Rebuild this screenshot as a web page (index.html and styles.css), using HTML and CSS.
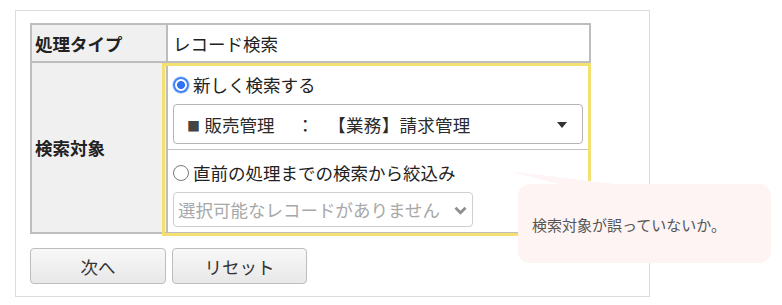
FILE: index.html
```html
<!DOCTYPE html>
<html lang="ja">
<head>
<meta charset="utf-8">
<link rel="stylesheet" href="styles.css">
</head>
<body>
<div class="frame">
  <div class="form">
    <div class="label row1">処理タイプ</div>
    <div class="value row1">レコード検索</div>
    <div class="label row2">検索対象</div>
    <div class="value row2 target">
      <div class="sub sub1">
        <label class="opt"><span class="radio checked"></span>新しく検索する</label>
        <div class="select big"><span class="seltext"><span class="sq">■</span>販売管理<span class="colon">：</span><span class="biz">【業務】請求管理</span></span><span class="tri"></span></div>
      </div>
      <div class="sub sub2">
        <label class="opt"><span class="radio"></span>直前の処理までの検索から絞込み</label>
        <div class="select small"><span>選択可能なレコードがありません</span>
          <svg class="chev" width="13" height="9" viewBox="0 0 13 9"><path d="M1.5 1.8 L6.5 6.8 L11.5 1.8" fill="none" stroke="#8f8f8f" stroke-width="2.8"/></svg>
        </div>
      </div>
      <div class="highlight"></div>
    </div>
  </div>
  <div class="buttons">
    <div class="btn b1">次へ</div>
    <div class="btn b2">リセット</div>
  </div>
</div>
<div class="tip">
  <svg class="pointer" width="120" height="16" viewBox="0 0 120 16"><polygon points="0,0 55,14 115,14" fill="#fef4f4"/></svg>
  <span>検索対象が誤っていないか。</span>
</div>
</body>
</html>
```
FILE: styles.css
```css
* { box-sizing: border-box; }
html, body { margin: 0; padding: 0; background: #fff; }
body {
  font-family: "Noto Sans CJK JP", "Noto Sans", sans-serif;
  font-size: 17.5px;
  color: #222;
  position: relative;
  width: 782px;
  height: 305px;
  overflow: hidden;
}
.frame {
  margin: 10px 0 0 15px;
  width: 635px;
  height: 287px;
  border: 1px solid #dcdcdc;
  padding: 12px 0 0 14px;
}
.form {
  width: 561px;
  display: grid;
  grid-template-columns: 136px 1fr;
  border: 2px solid #bdbdbd;
}
.label {
  background: #f0f0f0;
  border-right: 2px solid #bdbdbd;
  font-weight: 700;
  padding-left: 3px;
  display: flex;
  align-items: center;
}
.row1 { height: 38px; border-bottom: 2px solid #bdbdbd; }
.value.row1 { display: flex; align-items: center; padding-left: 5px; }
.row2 { height: 169px; }
.target { position: relative; display: flex; flex-direction: column; }
.sub { padding: 0 6px 0 5px; display: flex; flex-direction: column; }
.sub1 { height: 87px; padding-top: 10px; border-bottom: 1px solid #c4c4c4; gap: 7px; }
.sub2 { padding-top: 11px; gap: 7px; }
.opt { display: flex; align-items: center; height: 24px; line-height: 24px; }
.radio {
  width: 16px; height: 16px;
  border-radius: 50%;
  border: 1.5px solid #7a7a7a;
  margin-right: 4px;
  background: #fff;
  flex: none;
}
.radio.checked {
  border: 2px solid #3f82f7;
  background: radial-gradient(circle, #2f72f2 0 3.6px, #fff 4.4px);
  box-shadow: 0 0 0 1px #c9dcfd;
}
.select {
  display: flex;
  align-items: center;
  border-radius: 4px;
  background: #fff;
}
.select.big {
  height: 40px;
  border: 1.5px solid #b4b4b4;
  padding: 0 15px 0 13px;
  justify-content: space-between;
}
.seltext { white-space: nowrap; color: #2a2a2a; }
.sq {
  display: inline-block;
  width: 17.5px;
  font-size: 13px;
  color: #444;
  vertical-align: 1px;
}
.colon { margin-left: 22px; }
.biz { margin-left: 23px; letter-spacing: 0.3px; }
.tri {
  width: 0; height: 0;
  border-left: 5px solid transparent;
  border-right: 5px solid transparent;
  border-top: 6px solid #333;
  margin-top: 1px;
}
.select.small {
  width: 300px;
  height: 35px;
  border: 1px solid #cfcfcf;
  padding: 0 5px 0 4px;
  color: #a8a8a8;
  justify-content: space-between;
  white-space: nowrap;
}
.chev { flex: none; margin-top: 1px; }
.highlight {
  position: absolute;
  left: -6px; top: 0; right: -2px; bottom: -4px;
  border: 3px solid #f4e070;
  pointer-events: none;
}
.buttons { display: flex; gap: 6px; margin-top: 14px; }
.btn {
  height: 36px;
  border: 1.5px solid #bdbdbd;
  border-radius: 4px;
  background: linear-gradient(#f8f8f8, #e8e8e8);
  display: flex; align-items: center; justify-content: center;
  color: #333;
}
.b1 { width: 136px; }
.b2 { width: 135px; }
.tip {
  position: absolute;
  left: 518px; top: 184px;
  width: 253px; height: 79px;
  background: #fef4f4;
  border-radius: 12px;
  font-size: 15px;
  color: #555;
  display: flex; align-items: center;
  padding-left: 14px;
  padding-top: 2px;
}
.pointer { position: absolute; left: -10px; top: -13px; }
```
